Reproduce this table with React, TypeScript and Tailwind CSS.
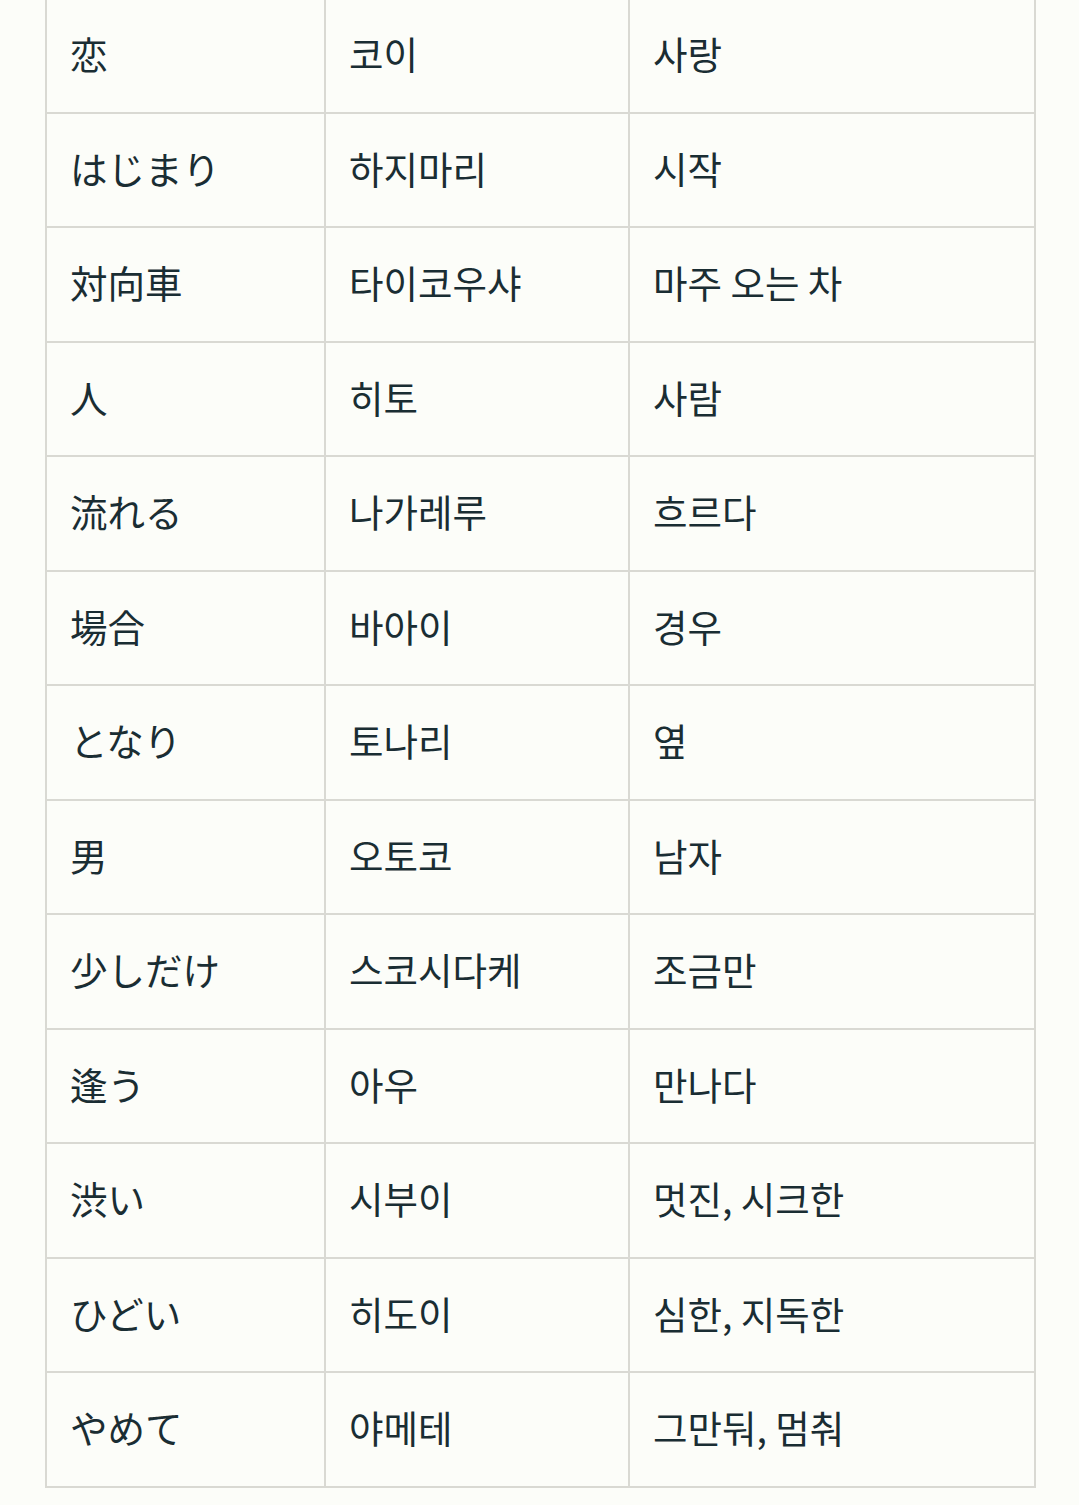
const rows: [string, string, string][] = [
  ['恋', '코이', '사랑'],
  ['はじまり', '하지마리', '시작'],
  ['対向車', '타이코우샤', '마주 오는 차'],
  ['人', '히토', '사람'],
  ['流れる', '나가레루', '흐르다'],
  ['場合', '바아이', '경우'],
  ['となり', '토나리', '옆'],
  ['男', '오토코', '남자'],
  ['少しだけ', '스코시다케', '조금만'],
  ['逢う', '아우', '만나다'],
  ['渋い', '시부이', '멋진, 시크한'],
  ['ひどい', '히도이', '심한, 지독한'],
  ['やめて', '야메테', '그만둬, 멈춰'],
];

export default function App() {
  return (
    <div
      className="min-h-[1508px] bg-[#fcfdf9] text-[#1a2d33] pl-[45px] pr-[45px]"
      style={{ fontFamily: '"Noto Sans CJK KR", "Noto Sans CJK JP", "Noto Sans", sans-serif' }}
    >
      <table className="-mt-[3px] w-[989px] border-collapse table-fixed">
        <colgroup>
          <col className="w-[279px]" />
          <col className="w-[304px]" />
          <col className="w-[406px]" />
        </colgroup>
        <tbody>
          {rows.map((r, i) => (
            <tr key={i} className="h-[114.5px]">
              {r.map((c, j) => (
                <td
                  key={j}
                  className="border-2 border-[#d9d9d3] px-[23px] pb-[5px] align-middle text-[37.5px] leading-none whitespace-nowrap"
                >
                  {c}
                </td>
              ))}
            </tr>
          ))}
        </tbody>
      </table>
    </div>
  );
}
